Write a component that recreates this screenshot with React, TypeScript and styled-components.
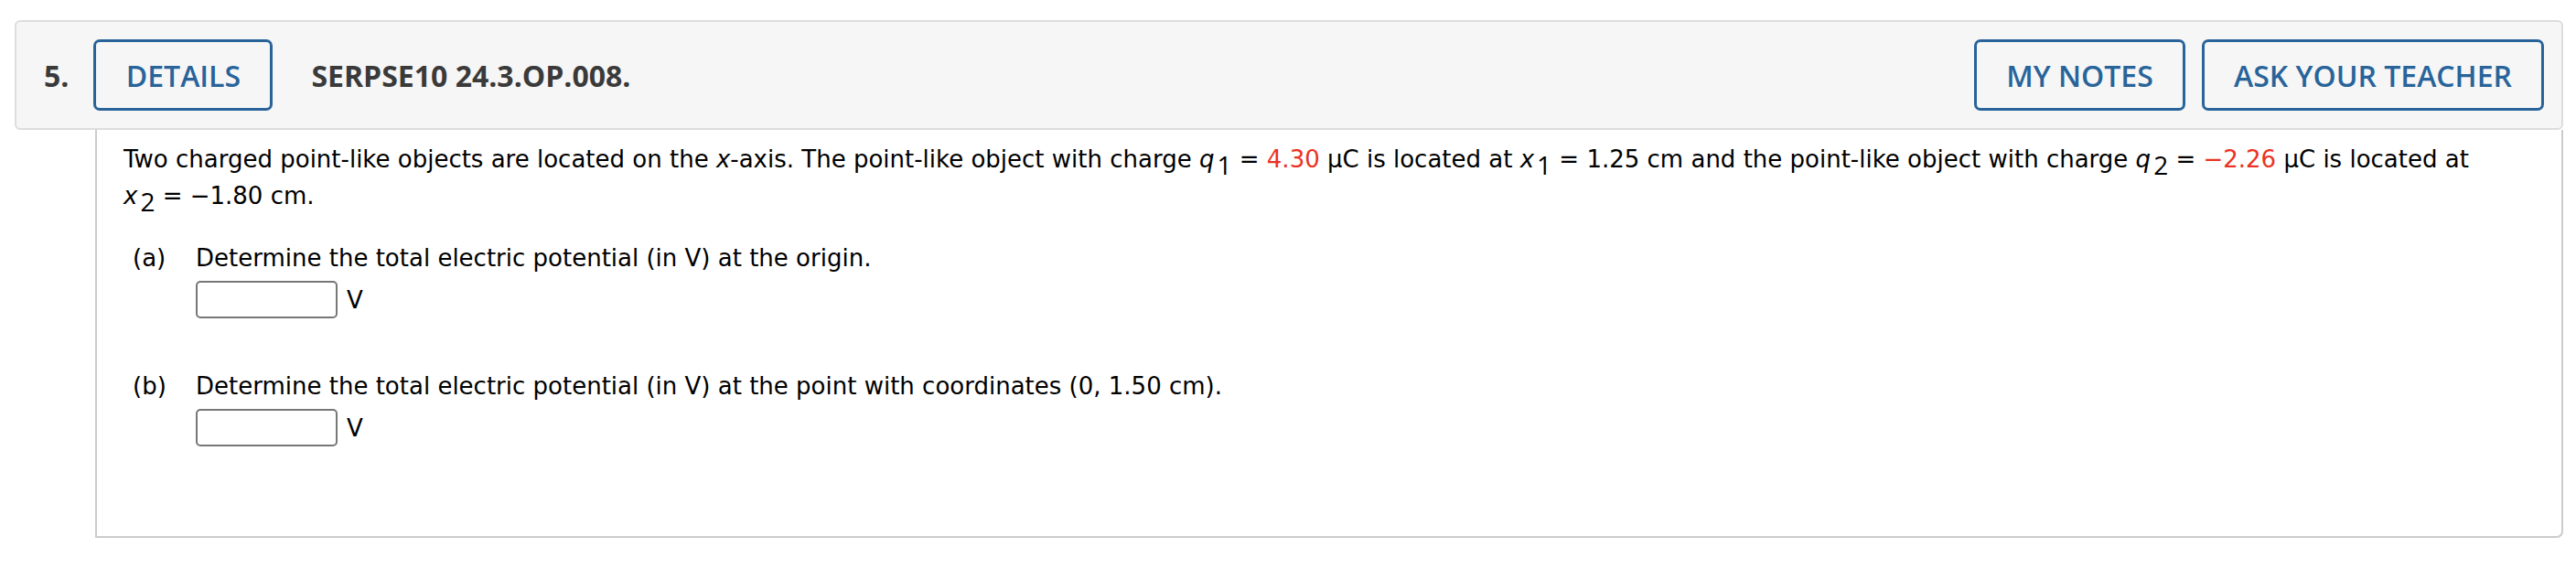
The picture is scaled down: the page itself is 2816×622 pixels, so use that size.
import React from "react";
import styled, { createGlobalStyle } from "styled-components";

const Global = createGlobalStyle`
  html, body { margin: 0; padding: 0; background: #ffffff; }
  body { font-family: "DejaVu Sans", Verdana, sans-serif; }
`;

const Page = styled.div`
  padding: 22px 14px 0 16px;
`;

const Header = styled.div`
  display: flex;
  align-items: center;
  height: 120px;
  box-sizing: border-box;
  background: #f6f6f6;
  border: 2px solid #dddddd;
  border-radius: 6px;
  padding: 0 19px 0 30px;
  font-family: "Open Sans", sans-serif;
`;

const Number = styled.span`
  font-size: 32px;
  font-weight: 700;
  color: #3a3a3a;
  margin-right: 27px;
`;

const Title = styled.span`
  font-size: 32px;
  font-weight: 700;
  color: #3a3a3a;
  margin-left: 42px;
  flex: 1;
`;

const OutlineButton = styled.button<{ $width: number }>`
  width: ${(p) => p.$width}px;
  height: 78px;
  box-sizing: border-box;
  background: transparent;
  border: 3px solid #28649a;
  border-radius: 7px;
  color: #28649a;
  font-family: "Open Sans", sans-serif;
  font-size: 32px;
  font-weight: 600;
  padding: 0;
  display: flex;
  align-items: center;
  justify-content: center;
  & + & {
    margin-left: 18px;
  }
`;

const Body = styled.div`
  margin-left: 88px;
  height: 446px;
  box-sizing: border-box;
  border: 2px solid #cccccc;
  border-top: none;
  border-radius: 0 0 7px 0;
  padding: 12px 50px 0 29px;
  color: #000;
  font-size: 26px;
  line-height: 40px;
`;

const Para = styled.p`
  margin: 0;
`;

const Keep = styled.span`
  white-space: nowrap;
`;

const Var = styled.i`
  font-family: "DejaVu Sans", sans-serif;
  font-style: italic;
`;

const Sub = styled.sub`
  font-family: "Open Sans", sans-serif;
  font-size: 28px;
  vertical-align: -8px;
  line-height: 0;
  margin-left: 3px;
`;

const Red = styled.span`
  color: #ea3323;
`;

const Part = styled.div<{ $top: number }>`
  margin-top: ${(p) => p.$top}px;
  display: grid;
  grid-template-columns: 79px auto;
  row-gap: 5px;
`;

const PartLabel = styled.span`
  padding-left: 10px;
`;

const AnswerRow = styled.div`
  grid-column: 2;
  display: flex;
  align-items: center;
  gap: 10px;
`;

const AnswerInput = styled.div`
  width: 155px;
  height: 41px;
  box-sizing: border-box;
  border: 2px solid #777777;
  border-radius: 5px;
  background: #fff;
`;

const Unit = styled.span`
  font-size: 26px;
`;

export default function App() {
  return (
    <>
      <Global />
      <Page>
        <Header>
          <Number>5.</Number>
          <OutlineButton $width={196}>DETAILS</OutlineButton>
          <Title>SERPSE10 24.3.OP.008.</Title>
          <OutlineButton $width={231}>MY NOTES</OutlineButton>
          <OutlineButton $width={374}>ASK YOUR TEACHER</OutlineButton>
        </Header>
        <Body>
          <Para>
            Two charged point-like objects are located on the <Var>x</Var>-axis. The
            point-like object with charge <Var>q</Var>
            <Sub>1</Sub> = <Red>4.30</Red> μC is located at <Var>x</Var>
            <Sub>1</Sub> = 1.25 cm and the point-like object with charge <Var>q</Var>
            <Sub>2</Sub> = <Red>−2.26</Red> μC is located at{" "}
            <Keep>
              <Var>x</Var>
              <Sub>2</Sub> = −1.80 cm.
            </Keep>
          </Para>
          <Part $top={28}>
            <PartLabel>(a)</PartLabel>
            <span>Determine the total electric potential (in V) at the origin.</span>
            <AnswerRow>
              <AnswerInput />
              <Unit>V</Unit>
            </AnswerRow>
          </Part>
          <Part $top={54}>
            <PartLabel>(b)</PartLabel>
            <span>
              Determine the total electric potential (in V) at the point with coordinates (0, 1.50 cm).
            </span>
            <AnswerRow>
              <AnswerInput />
              <Unit>V</Unit>
            </AnswerRow>
          </Part>
        </Body>
      </Page>
    </>
  );
}
